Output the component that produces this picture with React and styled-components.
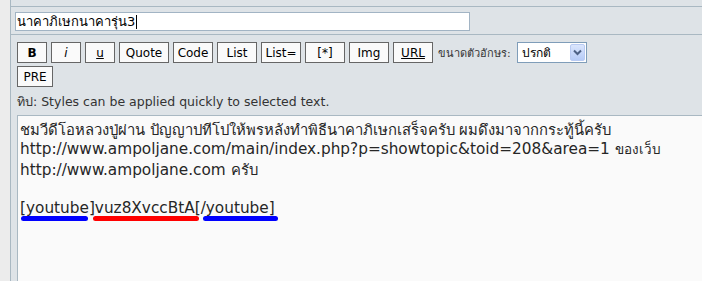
import React from "react";
import styled, { createGlobalStyle } from "styled-components";

const line = "#a9b8c2";

const GlobalStyle = createGlobalStyle`
    html, body {
        margin: 0;
        padding: 0;
        background: #ececec;
    }
`;

const Page = styled.div`
    display: flex;
    flex-flow: row nowrap;
    height: 281px;
    overflow: hidden;
    font-family: "DejaVu Sans", "Noto Sans", sans-serif;
`;

const Gutter = styled.div`
    width: 10px;
    flex: none;
    background: #ececec;
    border-right: 1px solid ${line};
`;

const Main = styled.div`
    flex: 1;
    display: flex;
    flex-flow: column nowrap;
    background: #dee3e7;
    min-width: 0;
`;

const TopRow = styled.div`
    height: 6px;
    flex: none;
    border-bottom: 1px solid ${line};
`;

const SubjectRow = styled.div`
    height: 28px;
    flex: none;
    box-sizing: border-box;
    padding: 5px 0 0 4px;
    border-bottom: 1px solid ${line};
`;

const Subject = styled.div`
    width: 455px;
    height: 19px;
    box-sizing: border-box;
    border: 1px solid #a2b4c4;
    background: #fff;
    font-size: 13px;
    line-height: 17px;
    padding-left: 1px;
    color: #000;
    display: flex;
    align-items: center;
    white-space: nowrap;

    span.caret {
        width: 1px;
        height: 14px;
        background: #000;
        margin-left: 1px;
    }
`;

const BodyRow = styled.div`
    flex: 1;
    display: flex;
    flex-flow: column nowrap;
    padding: 7px 0 0 6px;
    min-height: 0;
`;

const ButtonRow = styled.div`
    display: flex;
    flex-flow: row nowrap;
    align-items: center;
    gap: 4px;
    margin-top: ${p => (p.$second ? "3px" : "0")};
`;

const Button = styled.div`
    width: ${p => p.$w}px;
    height: 21px;
    box-sizing: border-box;
    border: 1px solid #666;
    background: #fafafa;
    font-size: 12px;
    color: #000;
    display: flex;
    align-items: center;
    justify-content: center;
    font-weight: ${p => (p.$bold ? "bold" : "normal")};
    font-style: ${p => (p.$italic ? "italic" : "normal")};
    text-decoration: ${p => (p.$under ? "underline" : "none")};
`;

const Label = styled.span`
    font-size: 11px;
    color: #333;
    margin: 0 2px 0 1px;
`;

const Select = styled.div`
    width: 70px;
    height: 21px;
    box-sizing: border-box;
    border: 1px solid #7f9db9;
    background: #fff;
    display: flex;
    align-items: center;
    justify-content: space-between;
    padding: 1px 1px 1px 4px;
    font-size: 12px;
    color: #000;

    span.arrow {
        width: 15px;
        height: 17px;
        box-sizing: border-box;
        border: 1px solid #b9cbf3;
        border-radius: 2px;
        background: linear-gradient(#dbe6fd, #b6cbf7);
        display: flex;
        align-items: center;
        justify-content: center;
    }
`;

const Tip = styled.div`
    margin-top: 7px;
    font-size: 12.5px;
    line-height: 15px;
    color: #333;
`;

const Editor = styled.div`
    margin-top: 6px;
    flex: 1;
    margin-right: -2px;
    border-top: 1px solid ${line};
    border-left: 1px solid ${line};
    background: #fafafa;
    padding: 4px 0 0 2px;
    font-size: 15.3px;
    line-height: 19.3px;
    color: #262626;
    white-space: nowrap;
`;

const Thai = styled.span`
    font-size: ${p => p.$size || 14.8}px;
`;

const Mark = styled.span`
    position: relative;

    &::after {
        content: "";
        position: absolute;
        left: ${p => p.$l}px;
        right: ${p => p.$r}px;
        bottom: -4px;
        height: 5px;
        border-radius: 3px;
        background: ${p => p.$c};
    }
`;

const Chevron = () => (
    <svg width="9" height="7" viewBox="0 0 9 7">
        <path d="M1 1.5 L4.5 5 L8 1.5" fill="none" stroke="#4d6185" strokeWidth="2" />
    </svg>
);

const App = () => {
    return (
        <Page>
            <GlobalStyle />
            <Gutter />
            <Main>
                <TopRow />
                <SubjectRow>
                    <Subject>
                        นาคาภิเษกนาคารุ่น3<span className="caret" />
                    </Subject>
                </SubjectRow>
                <BodyRow>
                    <ButtonRow>
                        <Button $w={30} $bold>B</Button>
                        <Button $w={30} $italic>i</Button>
                        <Button $w={30} $under>u</Button>
                        <Button $w={50}>Quote</Button>
                        <Button $w={40}>Code</Button>
                        <Button $w={40}>List</Button>
                        <Button $w={40}>List=</Button>
                        <Button $w={40}>[*]</Button>
                        <Button $w={40}>Img</Button>
                        <Button $w={40} $under>URL</Button>
                        <Label>ขนาดตัวอักษร:</Label>
                        <Select>
                            ปรกติ
                            <span className="arrow"><Chevron /></span>
                        </Select>
                    </ButtonRow>
                    <ButtonRow $second>
                        <Button $w={36}>PRE</Button>
                    </ButtonRow>
                    <Tip>ทิป: Styles can be applied quickly to selected text.</Tip>
                    <Editor>
                        <Thai>ชมวีดีโอหลวงปู่ผ่าน ปัญญาปทีโปให้พรหลังทำพิธีนาคาภิเษกเสร็จครับ ผมดึงมาจากกระทู้นี้ครับ</Thai><br />
                        http://www.ampoljane.com/main/index.php?p=showtopic&amp;toid=208&amp;area=1 <Thai $size={13.5}>ของเว็บ</Thai><br />
                        http://www.ampoljane.com <Thai>ครับ</Thai><br />
                        <br />
                        <Mark $c="#0000ff" $l={1} $r={7}>[youtube]</Mark>
                        <Mark $c="#ff0000" $l={-2} $r={-4}>vuz8XvccBtA</Mark>
                        <Mark $c="#0000ff" $l={8} $r={-3}>[/youtube]</Mark>
                    </Editor>
                </BodyRow>
            </Main>
        </Page>
    );
};

export default App;
